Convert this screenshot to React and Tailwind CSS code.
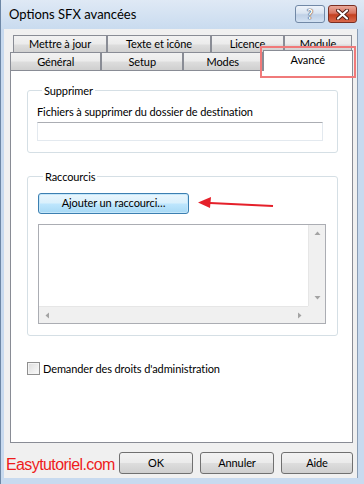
import React from 'react';

const btnBg = "bg-[linear-gradient(#f2f2f2_0%,#ebebeb_48%,#dddddd_52%,#cfcfcf_100%)]";

const Tab = ({ label, className }) => (
  <div className={`flex items-center justify-center border border-b-0 border-[#898c95] ${btnBg} ${className}`}>
    {label}
  </div>
);

const Button = ({ children, className = '' }) => (
  <div className={`flex items-center justify-center rounded-[3px] border border-[#707070] ${btnBg} ${className}`}>
    {children}
  </div>
);

const Arrow = ({ dir }) => (
  <svg width="7" height="7" viewBox="0 0 7 7">
    {dir === 'up' && <path d="M0.5 5 L3.5 1.5 L6.5 5 Z" fill="#a3a3a3" />}
    {dir === 'down' && <path d="M0.5 2 L3.5 5.5 L6.5 2 Z" fill="#a3a3a3" />}
    {dir === 'left' && <path d="M5 0.5 L1.5 3.5 L5 6.5 Z" fill="#a3a3a3" />}
    {dir === 'right' && <path d="M2 0.5 L5.5 3.5 L2 6.5 Z" fill="#a3a3a3" />}
  </svg>
);

export default function App() {
  return (
    <div className="relative w-[364px] h-[484px] overflow-hidden bg-[#c8daef] pl-[3px] pr-[6px] pb-[6px] border-l border-[#6d87a6] font-['Lato','Liberation_Sans',sans-serif] text-[11px] tracking-[-0.1px] text-black">
      {/* title bar */}
      <div className="h-[29px] -ml-[3px] -mr-[6px] bg-[linear-gradient(#dfe9f5,#c9dbef)] flex items-center pl-[8px] pr-[7px]">
        <span className="text-[13px] tracking-normal text-black">Options SFX avancées</span>
        <div className="ml-auto flex gap-[3px] self-start mt-[5px]">
          <div className="w-[30px] h-[18px] rounded-[3px] border border-[#7188a6] bg-[linear-gradient(#eef3fa_0%,#d9e4f1_45%,#bfd0e6_55%,#d2e1f2_100%)] flex items-center justify-center">
            <span className="text-[13px] font-bold leading-none text-white [text-shadow:0_0_1px_#445,0_0_1px_#445,0_0_1px_#445]">?</span>
          </div>
          <div className="w-[29px] h-[18px] rounded-[3px] border border-[#7a2f23] bg-[linear-gradient(#eaa99b_0%,#d8735f_45%,#c4401f_55%,#d9694c_100%)] flex items-center justify-center">
            <svg width="13" height="11" viewBox="0 0 13 11">
              <path d="M2 1.5 L11 9.5 M11 1.5 L2 9.5" stroke="#4a1a12" strokeWidth="4" strokeLinecap="round" />
              <path d="M2 1.5 L11 9.5 M11 1.5 L2 9.5" stroke="#ffffff" strokeWidth="2.2" strokeLinecap="round" />
            </svg>
          </div>
        </div>
      </div>

      {/* client area */}
      <div className="h-[449px] bg-[#f0f0f0] border-r border-[#8a9db4] pl-[6px] pr-[4px] pt-[6px]">
        {/* tabs */}
        <div className="h-[17px] flex pl-[3px]">
          <Tab label="Mettre à jour" className="w-[94px] h-[18px]" />
          <Tab label="Texte et icône" className="w-[104px] h-[18px]" />
          <Tab label="Licence" className="w-[73px] h-[18px]" />
          <Tab label="Module" className="w-[68px] h-[18px]" />
        </div>
        <div className="h-[18px] flex items-end">
          <Tab label="Général" className="w-[92px] h-[18px] pt-[2px]" />
          <Tab label="Setup" className="w-[82px] h-[18px] pt-[2px]" />
          <Tab label="Modes" className="w-[80px] h-[18px] pt-[2px]" />
          <div className="relative z-10 w-[91px] h-[21px] -mb-px border border-b-0 border-[#898c95] bg-white flex items-center justify-center pb-[2px]">
            Avancé
          </div>
        </div>

        {/* panel */}
        <div className="h-[373px] border border-[#898c95] bg-white pl-[16px] pr-[14px] pt-[12px]">
          <fieldset className="border border-[#d5dfe5] rounded-[3px] pl-[9px] pr-[14px] pb-[11px]">
            <legend className="ml-[5px] px-[2px] leading-[15px]">Supprimer</legend>
            <div className="mt-[6px] leading-[15px]">Fichiers à supprimer du dossier de destination</div>
            <div className="mt-[3px] h-[19px] border border-[#e3e9ef] border-t-[#abadb3] bg-white" />
          </fieldset>

          <fieldset className="mt-[16px] border border-[#d5dfe5] rounded-[3px] pl-[10px] pr-[11px] pb-[11px]">
            <legend className="ml-[5px] px-[2px] leading-[15px]">Raccourcis</legend>
            <div className="mt-[9px] w-[151px] h-[21px] rounded-[3px] border border-[#3c7fb1] bg-[linear-gradient(#eaf6fd_0%,#d9f0fc_48%,#bee6fd_52%,#a7d9f5_100%)] flex items-center justify-center shadow-[inset_0_0_0_1px_#c5e7fa]">
              Ajouter un raccourci…
            </div>
            <div className="mt-[10px] h-[100px] border border-[#abadb3] bg-white grid grid-cols-[1fr_17px] grid-rows-[1fr_17px]">
              <div />
              <div className="bg-[#f0f0f0] border-l border-[#e6e6e6] flex flex-col items-center justify-between py-[5px]">
                <Arrow dir="up" />
                <Arrow dir="down" />
              </div>
              <div className="bg-[#f0f0f0] border-t border-[#e6e6e6] flex items-center justify-between px-[5px]">
                <Arrow dir="left" />
                <Arrow dir="right" />
              </div>
              <div className="bg-[#f0f0f0]" />
            </div>
          </fieldset>

          <div className="mt-[25px] flex items-center gap-[3px] h-[15px]">
            <div className="w-[13px] h-[13px] border border-[#8f8f8f] bg-[linear-gradient(135deg,#dcdcdc,#fbfbfb)] shadow-[inset_0_0_0_1px_#f4f4f4]" />
            <span className="leading-[15px]">Demander des droits d'administration</span>
          </div>
        </div>

        {/* bottom row */}
        <div className="mt-[9px] flex items-center h-[22px]">
          <span className="-ml-[4px] mt-[3px] text-[16px] leading-none text-[#ee1c1c] font-['Liberation_Sans',sans-serif] tracking-[-0.6px]">Easytutoriel.com</span>
          <div className="ml-auto flex gap-[7px]">
            <Button className="w-[74px] h-[22px]">OK</Button>
            <Button className="w-[74px] h-[22px]">Annuler</Button>
            <Button className="w-[72px] h-[22px]">Aide</Button>
          </div>
        </div>
      </div>

      {/* annotations */}
      <div className="absolute left-[259px] top-[46px] w-[96px] h-[32px] border-2 border-[#f07a7a] z-20" />
      <svg className="absolute left-[195px] top-[195px] z-20" width="80" height="16" viewBox="0 0 80 16">
        <path d="M14 8 L77 11" stroke="#e5202a" strokeWidth="2" />
        <path d="M2 7.5 L15 2 L14 13 Z" fill="#e5202a" />
      </svg>
    </div>
  );
}
